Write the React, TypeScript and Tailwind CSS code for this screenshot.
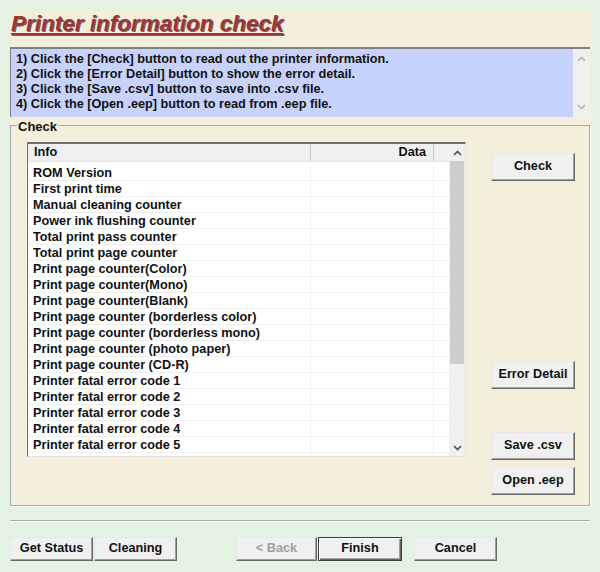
import React from "react";

const rows = [
  "ROM Version",
  "First print time",
  "Manual cleaning counter",
  "Power ink flushing counter",
  "Total print pass counter",
  "Total print page counter",
  "Print page counter(Color)",
  "Print page counter(Mono)",
  "Print page counter(Blank)",
  "Print page counter (borderless color)",
  "Print page counter (borderless mono)",
  "Print page counter (photo paper)",
  "Print page counter (CD-R)",
  "Printer fatal error code 1",
  "Printer fatal error code 2",
  "Printer fatal error code 3",
  "Printer fatal error code 4",
  "Printer fatal error code 5",
  "Cap counter",
];

const steps = [
  "1) Click the [Check] button to read out the printer information.",
  "2) Click the [Error Detail] button to show the error detail.",
  "3) Click the [Save .csv] button to save into .csv file.",
  "4) Click the [Open .eep] button to read from .eep file.",
];

function Chevron({ up, color }: { up?: boolean; color: string }) {
  return (
    <svg width="9" height="6" viewBox="0 0 9 6" className="block">
      <path
        d={up ? "M1 5 L4.5 1.5 L8 5" : "M1 1 L4.5 4.5 L8 1"}
        fill="none"
        stroke={color}
        strokeWidth="1.6"
      />
    </svg>
  );
}

interface BtnProps {
  children: React.ReactNode;
  className?: string;
  isDefault?: boolean;
  disabled?: boolean;
}

function Btn({ children, className = "", isDefault, disabled }: BtnProps) {
  const frame = isDefault
    ? "border border-[#3c3c3c] shadow-[inset_1px_1px_0_#ffffff,inset_-1px_-1px_0_#696969,inset_-2px_-2px_0_#a0a0a0]"
    : "border-t border-l border-t-[#e8e8e8] border-l-[#e8e8e8] border-r border-b border-r-[#696969] border-b-[#696969] shadow-[inset_-1px_-1px_0_#a0a0a0]";
  return (
    <button
      type="button"
      disabled={disabled}
      className={`bg-[#f0f0f0] flex items-center justify-center ${frame} ${
        disabled ? "text-[#a0a0a0]" : "text-[#111111]"
      } ${className}`}
    >
      {children}
    </button>
  );
}

export default function App() {
  return (
    <div className="w-[600px] h-[572px] bg-[#e3f2e2] font-['Liberation_Sans',Arial,sans-serif] font-bold text-[12.7px] text-[#111111] pt-[11px] overflow-hidden">
      <div className="ml-[10px] w-[581px] h-[495px] bg-[#f4eedc] flex flex-col">
        <div className="h-[36px] pl-[1px]">
          <h1 className="text-[22.5px] leading-[26px] italic text-[#9a3636] underline decoration-2 underline-offset-[2px] [text-shadow:1px_1px_0_#7a6262]">
            Printer information check
          </h1>
        </div>

        <div className="w-[580px] h-[70px] flex bg-[#c7d2fd] border-t-2 border-l border-[#7f7f7f] border-r-0 border-b-0">
          <div className="flex-1 pl-[5px] pt-[3px] leading-[15px]">
            {steps.map((s) => (
              <div key={s}>{s}</div>
            ))}
          </div>
          <div className="w-[17px] bg-[#f0f0f0] flex flex-col items-center justify-between py-[7px]">
            <Chevron up color="#b4b4b4" />
            <Chevron color="#b4b4b4" />
          </div>
        </div>

        <div className="mt-[8px] w-[580px] h-[381px] border border-[#a8a8a8] shadow-[1px_1px_0_#ffffff] relative flex">
          <span className="absolute -top-[7px] left-[6px] px-[1px] bg-[#f4eedc] leading-[16px] text-[13px]">
            Check
          </span>

          <div className="ml-[16px] mt-[16px] w-[439px] h-[315px] bg-white border-t-2 border-l border-t-[#6e6e6e] border-l-[#6e6e6e] border-r border-b border-r-[#e3e3e3] border-b-[#e3e3e3] flex">
            <div className="flex-1 flex flex-col overflow-hidden">
              <div className="h-[18px] flex bg-[#f0f0f0] border-b border-[#e6e6e6] shrink-0">
                <div className="w-[283px] pl-[6px] leading-[17px] border-r border-[#c8c8c8]">Info</div>
                <div className="w-[123px] pr-[7px] text-right leading-[17px] border-r border-[#c8c8c8]">Data</div>
                <div className="flex-1" />
              </div>
              <div className="pt-[3px]">
                {rows.map((r) => (
                  <div key={r} className="h-[16px] flex border-b border-[#f0f0f0]">
                    <div className="w-[283px] pl-[5px] leading-[16px] whitespace-nowrap border-r border-[#f0f0f0]">{r}</div>
                    <div className="w-[123px] border-r border-[#f0f0f0]" />
                    <div className="flex-1" />
                  </div>
                ))}
              </div>
            </div>
            <div className="w-[16px] bg-[#f0f0f0] flex flex-col">
              <div className="h-[17px] flex items-center justify-center">
                <Chevron up color="#505050" />
              </div>
              <div className="h-[203px] bg-[#cdcdcd] mx-[1px]" />
              <div className="flex-1" />
              <div className="h-[17px] flex items-center justify-center">
                <Chevron color="#505050" />
              </div>
            </div>
          </div>

          <div className="ml-[25px] flex flex-col">
            <Btn className="mt-[27px] w-[84px] h-[28px]">Check</Btn>
            <Btn className="mt-[180px] w-[84px] h-[28px]">Error Detail</Btn>
            <Btn className="mt-[43px] w-[84px] h-[28px]">Save .csv</Btn>
            <Btn className="mt-[7px] w-[84px] h-[28px]">Open .eep</Btn>
          </div>
        </div>
      </div>

      <div className="ml-[10px] mt-[14px] w-[580px] h-[2px] border-t border-[#a8a8a8] border-b border-b-white" />

      <div className="ml-[10px] mt-[15px] flex items-center">
        <Btn className="w-[83px] h-[24px]">Get Status</Btn>
        <Btn className="ml-[1px] w-[83px] h-[24px]">Cleaning</Btn>
        <Btn className="ml-[59px] w-[81px] h-[24px]" disabled>
          &lt; Back
        </Btn>
        <Btn className="ml-[1px] w-[84px] h-[24px]" isDefault>
          Finish
        </Btn>
        <Btn className="ml-[12px] w-[83px] h-[24px]">Cancel</Btn>
      </div>
    </div>
  );
}
